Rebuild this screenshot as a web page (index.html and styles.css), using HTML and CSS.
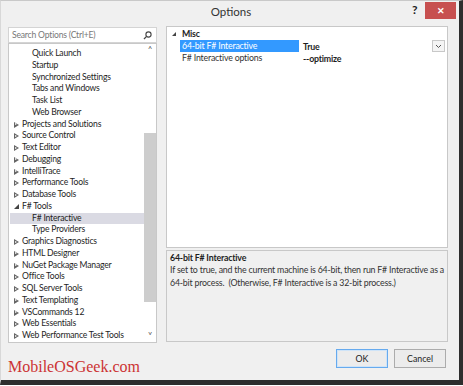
FILE: index.html
```html
<!DOCTYPE html>
<html lang="en">
<head>
    <meta charset="UTF-8">
    <title>Options</title>
    <link rel="stylesheet" href="styles.css">
</head>
<body>
    <div class="window">
        <div class="titlebar">
            <span class="title">Options</span>
            <span class="help">?</span>
            <span class="close">&#x2715;</span>
        </div>

        <div class="content">
            <div class="left">
                <div class="search">
                    <span class="search-text">Search Options (Ctrl+E)</span>
                    <svg class="search-icon" width="9" height="9" viewBox="0 0 9 9">
                        <circle cx="5.5" cy="3.5" r="2.6" fill="none" stroke="#444" stroke-width="1.1"/>
                        <line x1="3.6" y1="5.4" x2="1" y2="8" stroke="#444" stroke-width="1.3"/>
                    </svg>
                </div>
                <div class="tree">
                    <ul class="items">
                        <li class="child">Quick Launch</li>
                        <li class="child">Startup</li>
                        <li class="child">Synchronized Settings</li>
                        <li class="child">Tabs and Windows</li>
                        <li class="child">Task List</li>
                        <li class="child">Web Browser</li>
                        <li class="node">Projects and Solutions</li>
                        <li class="node">Source Control</li>
                        <li class="node">Text Editor</li>
                        <li class="node">Debugging</li>
                        <li class="node">IntelliTrace</li>
                        <li class="node">Performance Tools</li>
                        <li class="node">Database Tools</li>
                        <li class="node open">F# Tools</li>
                        <li class="child selected">F# Interactive</li>
                        <li class="child">Type Providers</li>
                        <li class="node">Graphics Diagnostics</li>
                        <li class="node">HTML Designer</li>
                        <li class="node">NuGet Package Manager</li>
                        <li class="node">Office Tools</li>
                        <li class="node">SQL Server Tools</li>
                        <li class="node">Text Templating</li>
                        <li class="node">VSCommands 12</li>
                        <li class="node">Web Essentials</li>
                        <li class="node">Web Performance Test Tools</li>
                    </ul>
                    <div class="scrollbar">
                        <span class="arrow">&#x2C4;</span>
                        <div class="track"><div class="thumb"></div></div>
                        <span class="arrow">&#x2C5;</span>
                    </div>
                </div>
            </div>

            <div class="right">
                <div class="grid">
                    <div class="category"><span class="cat-arrow"></span>Misc</div>
                    <div class="prop">
                        <span class="name active">64-bit F# Interactive</span>
                        <span class="value">True</span>
                        <span class="dropdown">
                            <svg width="7" height="5" viewBox="0 0 7 5"><polyline points="1,1 3.5,3.5 6,1" fill="none" stroke="#555" stroke-width="1"/></svg>
                        </span>
                    </div>
                    <div class="prop">
                        <span class="name">F# Interactive options</span>
                        <span class="value">--optimize</span>
                    </div>
                </div>
                <div class="desc">
                    <div class="desc-title">64-bit F# Interactive</div>
                    <p>If set to true, and the current machine is 64-bit, then run F# Interactive as a 64-bit process.&nbsp; (Otherwise, F# Interactive is a 32-bit process.)</p>
                </div>
            </div>
        </div>

        <div class="footer">
            <span class="watermark">MobileOSGeek.com</span>
            <div class="buttons">
                <button class="btn default">OK</button>
                <button class="btn">Cancel</button>
            </div>
        </div>
    </div>
</body>
</html>
```

FILE: styles.css
```css
body {
    margin: 0;
    background-color: #fff;
    font-family: Lato, "Open Sans", sans-serif;
    color: #1e1e1e;
}
.window {
    width: 458px;
    height: 379px;
    background-color: #f0f0f0;
    border-top: 1px solid #c9c9c9;
    border-left: 1px solid #d8d8d8;
    border-right: 4px solid #2e2e2e;
    border-bottom: 5px solid #2e2e2e;
    display: flex;
    flex-direction: column;
}
.titlebar {
    height: 25px;
    position: relative;
    display: flex;
    justify-content: center;
    align-items: center;
}
.title {
    font-size: 11.5px;
    color: #333;
    margin-top: -4px;
    margin-left: 2px;
}
.help {
    position: absolute;
    left: 411px;
    top: 1px;
    font-size: 12px;
    font-weight: bold;
    color: #222;
}
.close {
    position: absolute;
    left: 424px;
    top: 1px;
    width: 31px;
    height: 17px;
    background-color: #c75050;
    color: #fff;
    font-size: 9px;
    font-weight: bold;
    display: flex;
    justify-content: center;
    align-items: center;
}
.content {
    display: flex;
    gap: 9px;
    padding-left: 7px;
    letter-spacing: -0.2px;
}
.left {
    width: 149px;
    display: flex;
    flex-direction: column;
}
.search {
    height: 14px;
    margin-top: 1px;
    background-color: #fff;
    border: 1px solid #d4d4d4;
    display: flex;
    align-items: center;
    justify-content: space-between;
    padding: 0 4px 0 3px;
}
.search-text {
    font-size: 8.6px;
    color: #777;
}
.tree {
    height: 298px;
    background-color: #fff;
    border: 1px solid #c8c8c8;
    display: flex;
}
.items {
    list-style: none;
    margin: 0;
    padding: 4px 0 0 1px;
    flex: 1;
}
.items li {
    height: 11.75px;
    line-height: 11.75px;
    font-size: 8.6px;
    white-space: nowrap;
}
.node {
    padding-left: 12px;
    position: relative;
}
.node::before {
    content: "";
    position: absolute;
    left: 4px;
    top: 3px;
    border-left: 5px solid #666;
    border-top: 3px solid transparent;
    border-bottom: 3px solid transparent;
}
.node::after {
    content: "";
    position: absolute;
    left: 5px;
    top: 4.5px;
    border-left: 2.5px solid #fff;
    border-top: 1.5px solid transparent;
    border-bottom: 1.5px solid transparent;
}
.node.open::before {
    left: 4px;
    top: 3px;
    border-left: 5px solid transparent;
    border-top: 0;
    border-bottom: 5px solid #444;
}
.node.open::after {
    display: none;
}
.child {
    padding-left: 22px;
}
.selected {
    background-color: #dadae3;
}
.scrollbar {
    width: 12px;
    display: flex;
    flex-direction: column;
    align-items: center;
}
.arrow {
    font-size: 9px;
    line-height: 12px;
    color: #555;
}
.track {
    flex: 1;
    width: 100%;
    padding: 77px 0 28px;
}
.thumb {
    height: 100%;
    background-color: #cdcdcd;
}
.right {
    width: 282px;
    display: flex;
    flex-direction: column;
    gap: 2px;
}
.grid {
    height: 219px;
    background-color: #fff;
    border: 1px solid #c8c8c8;
    padding-top: 1px;
}
.category {
    height: 12px;
    line-height: 12px;
    font-size: 8.8px;
    font-weight: bold;
    padding-left: 15px;
    position: relative;
}
.cat-arrow {
    position: absolute;
    left: 5px;
    top: 4px;
    border-left: 4px solid transparent;
    border-bottom: 4px solid #444;
}
.prop {
    height: 12px;
    display: flex;
    align-items: center;
    font-size: 8.8px;
    margin-left: 13px;
}
.name {
    width: 119px;
    height: 100%;
    line-height: 12px;
    padding-left: 2px;
    box-sizing: border-box;
    color: #333;
}
.name.active {
    background-color: #3399ff;
    color: #fff;
}
.value {
    font-weight: bold;
    padding-left: 4px;
    flex: 1;
}
.dropdown {
    width: 11px;
    height: 10px;
    margin-right: 2px;
    border: 1px solid #c8c8c8;
    background-color: #f4f4f4;
    display: flex;
    justify-content: center;
    align-items: center;
}
.desc {
    height: 92px;
    border: 1px solid #c8c8c8;
    padding: 1px 3px;
    font-size: 8.8px;
    box-sizing: border-box;
}
.desc-title {
    font-weight: bold;
    line-height: 12px;
}
.desc p {
    margin: 0;
    line-height: 12.5px;
    color: #333;
}
.footer {
    display: flex;
    justify-content: space-between;
    align-items: flex-start;
    padding: 6px 13px 0 7px;
}
.watermark {
    font-family: "Liberation Serif", serif;
    font-size: 16px;
    color: #cc3333;
    margin-top: 9px;
}
.buttons {
    display: flex;
    gap: 6px;
}
.btn {
    width: 52px;
    height: 19px;
    font-family: Lato, "Open Sans", sans-serif;
    font-size: 8.8px;
    color: #222;
    background-color: #ececec;
    border: 1px solid #acacac;
    padding: 0;
}
.btn.default {
    border-color: #66aaee;
    box-shadow: inset 0 0 0 1px #cfe4f8;
}
```
